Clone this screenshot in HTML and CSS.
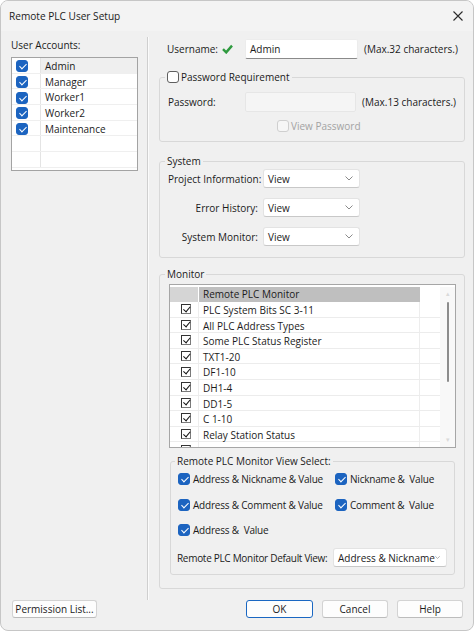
FILE: index.html
```html
<!DOCTYPE html>
<html lang="en">
<head>
  <meta charset="UTF-8" />
  <title>Remote PLC User Setup</title>
  <link rel="stylesheet" href="styles.css">
</head>
<body>
  <div class="window">
    <div class="titlebar">
      <span>Remote PLC User Setup</span>
      <svg class="close" width="10" height="10" viewBox="0 0 10 10"><path d="M0.5 0.5 L9.5 9.5 M9.5 0.5 L0.5 9.5" stroke="#2b2b2b" stroke-width="1.1" fill="none"/></svg>
    </div>

    <div class="client">
      <!-- left side: account list -->
      <div class="accounts">
        <div>
          <div class="accounts-label">User Accounts:</div>
          <div class="user-list">
            <div class="user-row selected"><span class="user-check"><span class="cb on"></span></span><span class="user-name">Admin</span></div>
            <div class="user-row"><span class="user-check"><span class="cb on"></span></span><span class="user-name">Manager</span></div>
            <div class="user-row"><span class="user-check"><span class="cb on"></span></span><span class="user-name">Worker1</span></div>
            <div class="user-row"><span class="user-check"><span class="cb on"></span></span><span class="user-name">Worker2</span></div>
            <div class="user-row"><span class="user-check"><span class="cb on"></span></span><span class="user-name">Maintenance</span></div>
            <div class="user-row"><span class="user-check"></span><span class="user-name"></span></div>
            <div class="user-row"><span class="user-check"></span><span class="user-name"></span></div>
          </div>
        </div>
        <button class="btn perm-btn">Permission List...</button>
      </div>

      <div class="divider"></div>

      <!-- right side: settings for the selected user -->
      <div class="settings">
        <div class="username-row">
          <span class="username-label">Username:</span>
          <svg class="ok-mark" width="11" height="10" viewBox="0 0 11 10"><path d="M1 5.2 L4.2 8.4 L10 1.6" stroke="#2f9a3f" stroke-width="2.4" fill="none"/></svg>
          <div class="textbox">Admin</div>
          <span class="hint">(Max.32 characters.)</span>
        </div>

        <fieldset class="group password-group">
          <legend><span class="check"><span class="cb"></span>Password Requirement</span></legend>
          <div class="password-row">
            <span class="password-label">Password:</span>
            <div class="textbox disabled"></div>
            <span class="hint">(Max.13 characters.)</span>
          </div>
          <div class="view-row">
            <span class="check disabled"><span class="cb"></span>View Password</span>
          </div>
        </fieldset>

        <fieldset class="group system-group">
          <legend>System</legend>
          <div class="system-row">
            <span class="system-label">Project Information:</span>
            <div class="dropdown">View<svg width="8" height="5" viewBox="0 0 8 5"><path d="M0.5 0.5 L4 4 L7.5 0.5" stroke="#8a8a8a" fill="none"/></svg></div>
          </div>
          <div class="system-row">
            <span class="system-label">Error History:</span>
            <div class="dropdown">View<svg width="8" height="5" viewBox="0 0 8 5"><path d="M0.5 0.5 L4 4 L7.5 0.5" stroke="#8a8a8a" fill="none"/></svg></div>
          </div>
          <div class="system-row">
            <span class="system-label">System Monitor:</span>
            <div class="dropdown">View<svg width="8" height="5" viewBox="0 0 8 5"><path d="M0.5 0.5 L4 4 L7.5 0.5" stroke="#8a8a8a" fill="none"/></svg></div>
          </div>
        </fieldset>

        <fieldset class="group monitor-group">
          <legend>Monitor</legend>
          <div class="monitor-list">
            <div class="monitor-table">
              <div class="mon-row head">
                <span class="mon-check"></span><span class="mon-name">Remote PLC Monitor</span><span class="mon-extra"></span>
              </div>
              <div class="mon-row"><span class="mon-check"><span class="tick"></span></span><span class="mon-name">PLC System Bits SC 3-11</span><span class="mon-extra"></span></div>
              <div class="mon-row"><span class="mon-check"><span class="tick"></span></span><span class="mon-name">All PLC Address Types</span><span class="mon-extra"></span></div>
              <div class="mon-row"><span class="mon-check"><span class="tick"></span></span><span class="mon-name">Some PLC Status Register</span><span class="mon-extra"></span></div>
              <div class="mon-row"><span class="mon-check"><span class="tick"></span></span><span class="mon-name">TXT1-20</span><span class="mon-extra"></span></div>
              <div class="mon-row"><span class="mon-check"><span class="tick"></span></span><span class="mon-name">DF1-10</span><span class="mon-extra"></span></div>
              <div class="mon-row"><span class="mon-check"><span class="tick"></span></span><span class="mon-name">DH1-4</span><span class="mon-extra"></span></div>
              <div class="mon-row"><span class="mon-check"><span class="tick"></span></span><span class="mon-name">DD1-5</span><span class="mon-extra"></span></div>
              <div class="mon-row"><span class="mon-check"><span class="tick"></span></span><span class="mon-name">C 1-10</span><span class="mon-extra"></span></div>
              <div class="mon-row"><span class="mon-check"><span class="tick"></span></span><span class="mon-name">Relay Station Status</span><span class="mon-extra"></span></div>
              <div class="mon-row"><span class="mon-check"><span class="tick"></span></span><span class="mon-name"></span><span class="mon-extra"></span></div>
            </div>
            <div class="scrollbar">
              <span class="arrow">&#9652;</span>
              <div class="track"><div class="thumb"></div></div>
              <span class="arrow">&#9662;</span>
            </div>
          </div>

          <fieldset class="group view-group">
            <legend>Remote PLC Monitor View Select:</legend>
            <div class="view-grid">
              <span class="check"><span class="cb on"></span>Address &amp; Nickname &amp; Value</span>
              <span class="check"><span class="cb on"></span>Nickname &amp;&nbsp; Value</span>
              <span class="check"><span class="cb on"></span>Address &amp; Comment &amp; Value</span>
              <span class="check"><span class="cb on"></span>Comment &amp;&nbsp; Value</span>
              <span class="check"><span class="cb on"></span>Address &amp;&nbsp; Value</span>
            </div>
            <div class="default-row">
              <span class="default-label">Remote PLC Monitor Default View:</span>
              <div class="dropdown wide">Address &amp; Nickname<svg width="8" height="5" viewBox="0 0 8 5"><path d="M0.5 0.5 L4 4 L7.5 0.5" stroke="#8a8a8a" fill="none"/></svg></div>
            </div>
          </fieldset>
        </fieldset>

        <div class="buttons">
          <button class="btn default">OK</button>
          <button class="btn">Cancel</button>
          <button class="btn">Help</button>
        </div>
      </div>
    </div>
  </div>
</body>
</html>
```

FILE: styles.css
```css
* {
  box-sizing: border-box;
}
body {
  margin: 0;
  background: #ffffff;
  font-family: "Open Sans", "Noto Sans", sans-serif;
  font-size: 10px;
  color: #1b1b1b;
  white-space: nowrap;
}
.window {
  width: 474px;
  height: 631px;
  background: #f0f0f0;
  border: 1px solid #c6c6c6;
  border-radius: 8px;
  overflow: hidden;
  display: flex;
  flex-direction: column;
}
.titlebar {
  height: 30px;
  display: flex;
  align-items: center;
  justify-content: space-between;
  padding: 0 10px 0 8px;
  background: #f3f3f3;
  font-size: 10.1px;
}
.client {
  flex: 1;
  display: flex;
  padding-bottom: 12px;
}

/* account list */
.accounts {
  width: 146px;
  flex-shrink: 0;
  padding: 7px 8px 0 10px;
  display: flex;
  flex-direction: column;
  justify-content: space-between;
}
.accounts-label {
  height: 14px;
  line-height: 14px;
  margin-bottom: 5px;
}
.user-list {
  width: 127px;
  height: 114px;
  border: 1px solid #a3a3a3;
  background: #fff;
}
.user-row {
  display: flex;
  height: 15.7px;
  border-bottom: 1px solid #efefef;
}
.user-check {
  width: 29px;
  padding: 2px 0 0 4px;
  display: flex;
  align-items: center;
  border-right: 1px solid #e4e4e4;
}
.user-name {
  flex: 1;
  padding: 1px 0 0 4px;
  line-height: 15px;
}
.user-row.selected .user-name {
  background: #efefef;
}

.divider {
  width: 2px;
  flex-shrink: 0;
  margin: 6px 0 18px 0;
  border-left: 1px solid #cfcfcf;
  border-right: 1px solid #fbfbfb;
}

/* checkboxes */
.cb {
  position: relative;
  display: inline-block;
  width: 12px;
  height: 12px;
  border: 1px solid #5f5f5f;
  border-radius: 3px;
  background: #fff;
  flex-shrink: 0;
}
.cb.on {
  background: #1c64c0;
  border-color: #1c64c0;
}
.cb.on::after {
  content: "";
  position: absolute;
  left: 3.5px;
  top: 1px;
  width: 3px;
  height: 6px;
  border: solid #fff;
  border-width: 0 1.4px 1.4px 0;
  transform: rotate(45deg);
}
.check {
  display: inline-flex;
  align-items: center;
  gap: 2px;
  height: 14px;
}
.check.disabled {
  color: #a3a3a3;
}
.check.disabled .cb {
  border-color: #cfcfcf;
  background: #f6f6f6;
}

/* settings column */
.settings {
  flex: 1;
  min-width: 0;
  display: flex;
  flex-direction: column;
  padding: 8px 8px 0 10px;
}
.username-row {
  display: flex;
  align-items: center;
  height: 20px;
}
.username-label {
  width: 55px;
  padding-left: 8px;
  box-sizing: content-box;
}
.ok-mark {
  margin-right: 12px;
}
.textbox {
  width: 113px;
  height: 20px;
  line-height: 19px;
  padding-left: 4px;
  background: #fff;
  border: 1px solid #ececec;
  border-bottom-color: #8a8a8a;
  border-radius: 2px;
}
.textbox.disabled {
  width: 112px;
  background: #f5f5f5;
  border-color: #e6e6e6;
}
.hint {
  margin-left: 6px;
}

.group {
  margin: 0;
  padding: 0 8px 6px 8px;
  border: 1px solid #d8d8d8;
  border-radius: 3px;
  min-width: 0;
}
.group legend {
  margin-left: -3px;
  padding: 0 2px;
  height: 14px;
  line-height: 14px;
}
.password-group {
  margin-top: 11px;
  padding-top: 8px;
}
.password-row {
  display: flex;
  align-items: center;
  height: 20px;
}
.password-label {
  width: 77px;
}
.view-row {
  margin-top: 7px;
  padding-left: 109px;
}

.system-group {
  margin-top: 12px;
  padding-top: 1px;
  padding-bottom: 11px;
}
.system-row {
  display: flex;
  align-items: center;
  height: 19px;
}
.system-row + .system-row {
  margin-top: 10px;
}
.system-label {
  width: 90px;
  text-align: right;
  margin-right: 5px;
}
.dropdown {
  width: 97px;
  height: 19px;
  display: flex;
  align-items: center;
  justify-content: space-between;
  padding: 0 6px 0 4px;
  background: #fff;
  border: 1px solid #e3e3e3;
  border-bottom-color: #c8c8c8;
  border-radius: 3px;
}
.dropdown.wide {
  width: 114px;
  height: 19px;
}

/* monitor list */
.monitor-group {
  margin-top: 9px;
  padding: 3px 8px 13px 9px;
}
.monitor-group > legend {
  margin-left: -4px;
}
.monitor-list {
  display: flex;
  height: 164px;
  padding-top: 2px;
  border: 1px solid #a6a6a6;
  background: #fff;
  overflow: hidden;
}
.monitor-table {
  flex: 1;
  overflow: hidden;
}
.mon-row {
  display: flex;
  height: 15.6px;
  border-bottom: 1px solid #ececec;
}
.mon-row.head {
  height: 15px;
  border-bottom: none;
}
.mon-check {
  width: 29px;
  padding-left: 11px;
  display: flex;
  align-items: center;
  border-right: 1px solid #ededed;
}
.mon-name {
  width: 221px;
  padding: 1px 0 0 4px;
  line-height: 15px;
  border-right: 1px solid #ededed;
}
.mon-extra {
  flex: 1;
}
.head .mon-check {
  background: #d5d5d5;
  border-right: 1px solid #ffffff;
}
.head .mon-name {
  padding-top: 0;
  background: #bfbfbf;
  border-right: none;
}
.tick {
  position: relative;
  width: 10px;
  height: 10px;
  border: 1px solid #7a7a7a;
  border-top-color: #333;
  border-left-color: #333;
  background: #fff;
}
.tick::after {
  content: "";
  position: absolute;
  left: 2.5px;
  top: -0.5px;
  width: 3px;
  height: 5.5px;
  border: solid #111;
  border-width: 0 1.8px 1.8px 0;
  transform: rotate(40deg);
}
.scrollbar {
  width: 15px;
  background: #f8f8f8;
  display: flex;
  flex-direction: column;
  align-items: center;
}
.arrow {
  height: 14px;
  line-height: 14px;
  font-size: 7px;
  color: #dadada;
}
.track {
  flex: 1;
  width: 100%;
  display: flex;
  justify-content: center;
}
.thumb {
  width: 2px;
  height: 80px;
  margin-top: 1px;
  background: #8c8c8c;
  border-radius: 1px;
}

.view-group {
  margin: 6px 1px 0 1px;
  padding: 4px 7px 7px 7px;
}
.view-group > legend {
  margin-left: -3px;
}
.view-grid {
  display: grid;
  grid-template-columns: 157px 1fr;
  row-gap: 11.5px;
  letter-spacing: -0.2px;
}
.view-grid .check {
  gap: 3px;
}
.default-row {
  display: flex;
  align-items: center;
  margin-top: 11px;
  margin-left: -1px;
}
.default-label {
  width: 158px;
  letter-spacing: -0.3px;
}

/* dialog buttons */
.btn {
  height: 18px;
  padding: 0;
  font-family: inherit;
  font-size: 10px;
  color: #1b1b1b;
  background: #fdfdfd;
  border: 1px solid #d3d3d3;
  border-bottom-color: #bcbcbc;
  border-radius: 3px;
}
.perm-btn {
  width: 85px;
  margin-left: 1px;
}
.buttons {
  margin-top: auto;
  display: flex;
  justify-content: flex-end;
  gap: 9px;
  padding-right: 2px;
}
.buttons .btn {
  width: 66px;
}
.btn.default {
  width: 67px;
  border-color: #1a67c2;
}
```
